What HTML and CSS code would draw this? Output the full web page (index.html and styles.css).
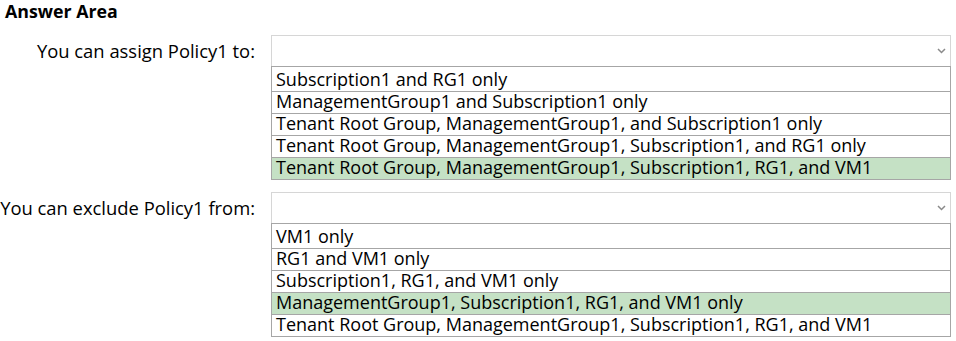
FILE: index.html
```html
<!DOCTYPE html>
<html>
	<head>
		<meta charset="utf-8">
		<title>Answer Area</title>
		<link rel="stylesheet" href="styles.css">
	</head>
	<body>
		<p class="title">Answer Area</p>
		<div class="q">
			<div class="label">You can assign Policy1 to:</div>
			<div class="box">
				<div class="sel">
					<svg class="arrow" width="9" height="6" viewBox="0 0 9 6"><polyline points="1,1 4.5,4.5 8,1" fill="none" stroke="#8a8a8a" stroke-width="1.5"/></svg>
				</div>
				<ul class="opts">
					<li>Subscription1 and RG1 only</li>
					<li>ManagementGroup1 and Subscription1 only</li>
					<li>Tenant Root Group, ManagementGroup1, and Subscription1 only</li>
					<li>Tenant Root Group, ManagementGroup1, Subscription1, and RG1 only</li>
					<li class="on">Tenant Root Group, ManagementGroup1, Subscription1, RG1, and VM1</li>
				</ul>
			</div>
		</div>
		<div class="q">
			<div class="label">You can exclude Policy1 from:</div>
			<div class="box">
				<div class="sel">
					<svg class="arrow" width="9" height="6" viewBox="0 0 9 6"><polyline points="1,1 4.5,4.5 8,1" fill="none" stroke="#8a8a8a" stroke-width="1.5"/></svg>
				</div>
				<ul class="opts">
					<li>VM1 only</li>
					<li>RG1 and VM1 only</li>
					<li>Subscription1, RG1, and VM1 only</li>
					<li class="on">ManagementGroup1, Subscription1, RG1, and VM1 only</li>
					<li>Tenant Root Group, ManagementGroup1, Subscription1, RG1, and VM1</li>
				</ul>
			</div>
		</div>
	</body>
</html>
```
FILE: styles.css
```css
*{margin:0;padding:0;}
body{background:#fff;font-family:"Open Sans","Noto Sans",sans-serif;color:#000;}
ul li{list-style:none;}
.title{height:35px;font-size:17.8px;font-weight:bold;line-height:22px;padding-left:5px;}
.q{display:flex;margin-bottom:12px;}
.q .label{width:255px;padding-right:16px;text-align:right;font-size:18.4px;line-height:31px;}
.q .box{width:680px;}
.q .sel{height:30px;border:1px solid #d6d6d6;border-bottom:none;display:flex;align-items:center;justify-content:flex-end;padding-right:4px;}
.q .opts{border:1px solid #a6a6a6;border-bottom:none;}
.q .opts li{height:21px;border-bottom:1px solid #a6a6a6;font-size:18px;line-height:19px;padding-left:4px;white-space:nowrap;}
.q .opts li:first-child{height:21px;padding-top:3px;}
.q .opts li.on{background:#c5e1c5;}
```
